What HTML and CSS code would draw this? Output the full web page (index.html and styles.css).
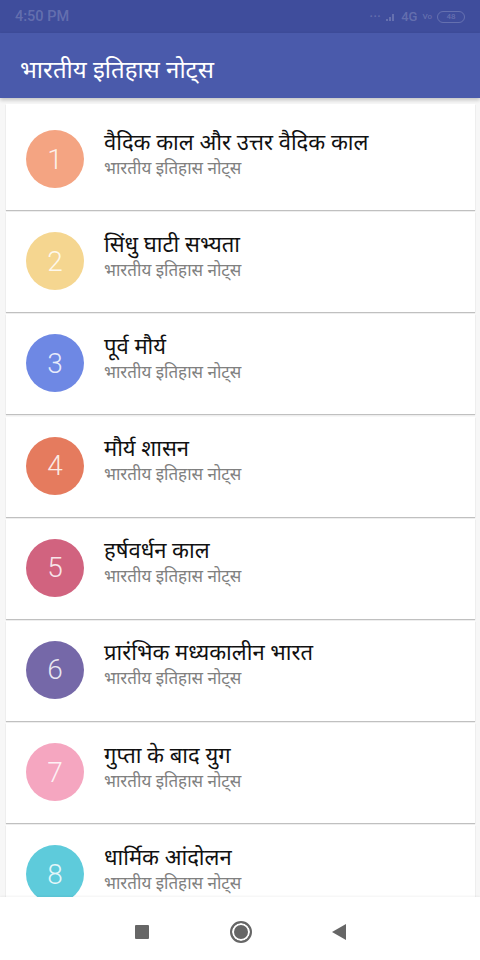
FILE: index.html
```html
<!DOCTYPE html>
<html lang="hi">
<head>
<meta charset="utf-8">
<link rel="stylesheet" href="styles.css">
</head>
<body>
<div class="screen">
  <div class="status">
    <span class="time">4:50 PM</span>
    <span class="sys">
      <span class="dots">•••</span>
      <svg class="sig" width="10" height="8" viewBox="0 0 10 8"><rect x="0" y="6" width="2" height="2"/><rect x="3" y="4" width="2" height="4"/><rect x="6" y="1" width="2" height="7"/></svg>
      <span class="net">4G</span>
      <span class="vo">Vo</span>
      <span class="bat">48</span>
    </span>
  </div>
  <header class="appbar">भारतीय इतिहास नोट्स</header>
  <main class="list">
    <div class="card first"><div class="num c1">1</div><div class="txt"><div class="title">वैदिक काल और उत्तर वैदिक काल</div><div class="sub">भारतीय इतिहास नोट्स</div></div></div>
    <div class="card"><div class="num c2">2</div><div class="txt"><div class="title">सिंधु घाटी सभ्यता</div><div class="sub">भारतीय इतिहास नोट्स</div></div></div>
    <div class="card"><div class="num c3">3</div><div class="txt"><div class="title">पूर्व मौर्य</div><div class="sub">भारतीय इतिहास नोट्स</div></div></div>
    <div class="card"><div class="num c4">4</div><div class="txt"><div class="title">मौर्य शासन</div><div class="sub">भारतीय इतिहास नोट्स</div></div></div>
    <div class="card"><div class="num c5">5</div><div class="txt"><div class="title">हर्षवर्धन काल</div><div class="sub">भारतीय इतिहास नोट्स</div></div></div>
    <div class="card"><div class="num c6">6</div><div class="txt"><div class="title">प्रारंभिक मध्यकालीन भारत</div><div class="sub">भारतीय इतिहास नोट्स</div></div></div>
    <div class="card"><div class="num c7">7</div><div class="txt"><div class="title">गुप्ता के बाद युग</div><div class="sub">भारतीय इतिहास नोट्स</div></div></div>
    <div class="card"><div class="num c8">8</div><div class="txt"><div class="title">धार्मिक आंदोलन</div><div class="sub">भारतीय इतिहास नोट्स</div></div></div>
  </main>
  <nav class="navbar">
    <span class="sq"></span>
    <span class="home"></span>
    <svg class="back" width="16" height="18" viewBox="0 0 16 18"><polygon points="15,1 15,17 1,9"/></svg>
  </nav>
</div>
</body>
</html>
```

FILE: styles.css
```css
* { box-sizing: border-box; }
html, body { margin: 0; padding: 0; }
body { font-family: "Noto Sans", "Lohit Devanagari", "FreeSans", Roboto, sans-serif; background: #fff; }
.screen { width: 480px; height: 960px; display: flex; flex-direction: column; overflow: hidden; background: #f7f7f7; }
.status { height: 33px; flex: none; background: #3f4d9c; display: flex; align-items: center; justify-content: space-between; padding: 0 15px 0 15px; color: rgba(255,255,255,0.2); font-family: Roboto, sans-serif; font-size: 14.5px; font-weight: 500; }
.sys { display: flex; align-items: center; gap: 5px; }
.dots { font-size: 8px; letter-spacing: 1px; }
.sig { fill: rgba(255,255,255,0.2); }
.net { font-size: 13px; }
.vo { font-size: 8px; }
.bat { display: inline-flex; align-items: center; justify-content: center; width: 28px; height: 12px; border: 1.5px solid rgba(255,255,255,0.2); border-radius: 6px; font-size: 8px; }
.appbar { height: 65px; flex: none; background: #4a5aab; color: #fff; font-size: 24px; display: flex; align-items: center; padding: 6px 20px 0; box-shadow: 0 2px 4px rgba(0,0,0,0.22); position: relative; z-index: 1; }
.list { flex: 1; overflow: hidden; padding: 6px 5px 0 6px; }
.card { height: 100px; background: #fff; margin-bottom: 2.2px; display: flex; align-items: center; padding: 0 0 2px 20px; box-shadow: 0 1px 1px rgba(0,0,0,0.22); }
.card.first { height: 106px; padding-top: 6px; }
.num { width: 58px; height: 58px; border-radius: 50%; flex: none; display: flex; align-items: center; justify-content: center; color: rgba(255,255,255,0.85); font-family: Roboto, sans-serif; font-weight: 300; font-size: 28px; }
.c1 { background: #f4a482; }
.c2 { background: #f5d690; }
.c3 { background: #6e88e4; }
.c4 { background: #e57b5e; }
.c5 { background: #d1637f; }
.c6 { background: #7568a8; }
.c7 { background: #f5a6c0; }
.c8 { background: #5ecbdb; }
.txt { margin: 0 0 12px 20px; display: flex; flex-direction: column; gap: 3px; }
.title { font-size: 22px; color: #111; line-height: 26px; }
.sub { font-size: 17px; color: #808080; line-height: 22px; }
.navbar { height: 63px; flex: none; background: #fff; display: flex; align-items: center; justify-content: center; position: relative; box-shadow: 0 -1px 2px rgba(0,0,0,0.05); padding: 6px 0 0 2px; }
.sq { width: 14px; height: 14px; background: #666; border-radius: 1px; }
.home { width: 22px; height: 22px; border-radius: 50%; border: 2px solid #666; background: #666; box-shadow: inset 0 0 0 2px #fff; margin: 0 79px 0 81px; }
.back { fill: #666; }
```
